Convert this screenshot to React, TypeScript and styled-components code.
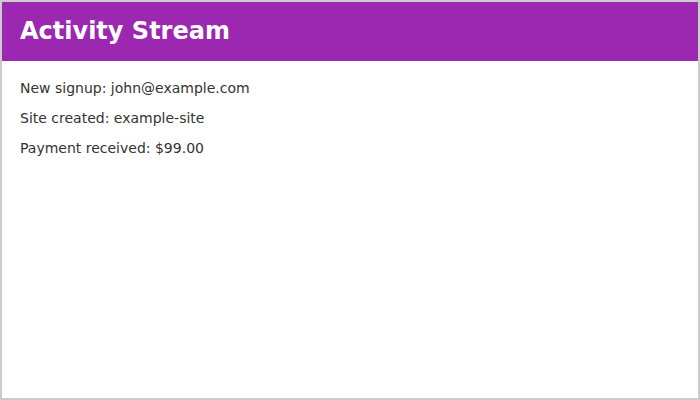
import React from 'react';
import styled, { createGlobalStyle } from 'styled-components';

const GlobalStyle = createGlobalStyle`
  html, body {
    margin: 0;
    padding: 0;
    background: #ffffff;
  }
  body {
    font-family: "DejaVu Sans", sans-serif;
  }
`;

const Frame = styled.div`
  width: 700px;
  height: 400px;
  box-sizing: border-box;
  border: 2px solid #cccccc;
  display: flex;
  flex-direction: column;
  background: #ffffff;
`;

const Header = styled.header`
  background: #9c27b0;
  padding: 0 18px 1px;
  height: 59px;
  box-sizing: border-box;
  display: flex;
  align-items: center;
`;

const Title = styled.h1`
  margin: 0;
  color: #ffffff;
  font-size: 24px;
  font-weight: 700;
`;

const List = styled.ul`
  list-style: none;
  margin: 0;
  padding: 12px 18px;
`;

const Item = styled.li`
  font-size: 14px;
  line-height: 30px;
  color: #333333;
`;

const events = [
  'New signup: john@example.com',
  'Site created: example-site',
  'Payment received: $99.00',
];

export default function App() {
  return (
    <>
      <GlobalStyle />
      <Frame>
        <Header>
          <Title>Activity Stream</Title>
        </Header>
        <List>
          {events.map((e) => (
            <Item key={e}>{e}</Item>
          ))}
        </List>
      </Frame>
    </>
  );
}
